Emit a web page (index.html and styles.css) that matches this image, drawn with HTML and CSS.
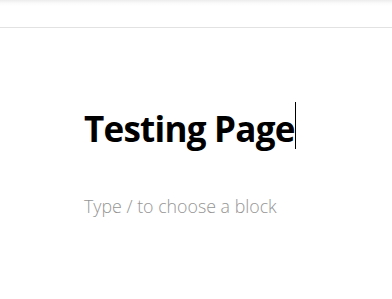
FILE: index.html
```html
<!DOCTYPE html>
<html lang="en">
<head>
<meta charset="utf-8">
<title>Testing Page</title>
<link rel="stylesheet" href="styles.css">
</head>
<body>
<header class="topbar"></header>
<main class="editor">
  <h1 class="title"><span class="title-text">Testing Page</span><span class="caret"></span></h1>
  <p class="placeholder">Type / to choose a block</p>
</main>
</body>
</html>
```

FILE: styles.css
```css
html, body {
  margin: 0;
  padding: 0;
  background: #fff;
}
body {
  font-family: "Open Sans", "Noto Sans", "Liberation Sans", sans-serif;
  width: 392px;
  height: 299px;
  overflow: hidden;
}
.topbar {
  height: 27px;
  border-bottom: 1px solid #e2e2e2;
  background: linear-gradient(to bottom, #ececec 0px, #fafafa 3px, #fff 6px);
}
.editor {
  padding: 74px 0 0 84px;
}
.title {
  margin: 0;
  display: flex;
  align-items: flex-start;
  font-size: 35px;
  font-weight: 700;
  line-height: 53px;
  color: #000;
  letter-spacing: -0.75px;
}
.caret {
  width: 1px;
  height: 47px;
  background: #000;
  margin-left: 0.5px;
}
.placeholder {
  margin: 39px 0 0 0;
  font-size: 17.8px;
  line-height: 24px;
  color: #959595;
  font-weight: 300;
}
```
